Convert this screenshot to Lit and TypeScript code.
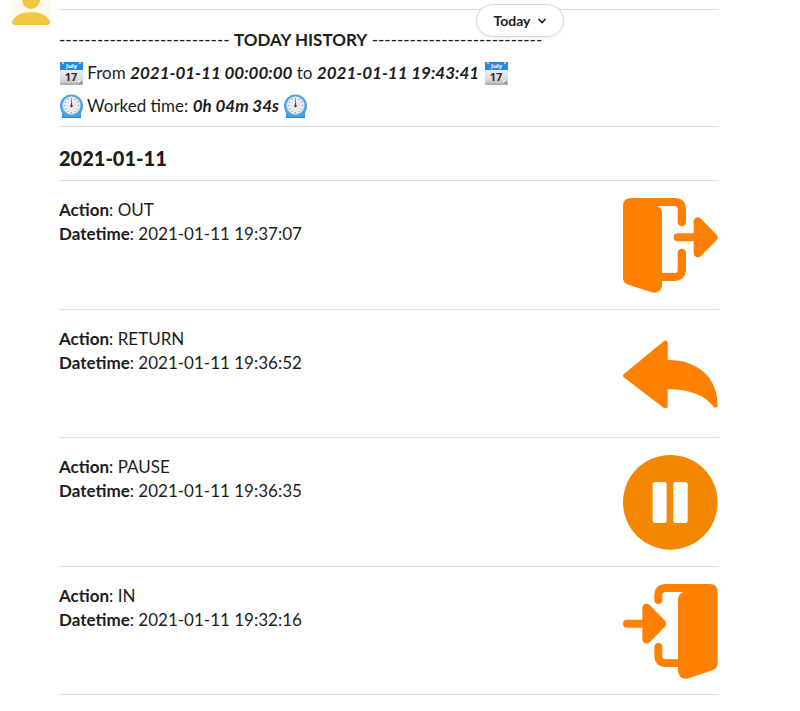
import { LitElement, html, css, svg } from "lit";
import { customElement, property } from "lit/decorators.js";

type ActionKind = "OUT" | "RETURN" | "PAUSE" | "IN";

interface Entry {
  action: ActionKind;
  datetime: string;
}

const ENTRIES: Entry[] = [
  { action: "OUT", datetime: "2021-01-11 19:37:07" },
  { action: "RETURN", datetime: "2021-01-11 19:36:52" },
  { action: "PAUSE", datetime: "2021-01-11 19:36:35" },
  { action: "IN", datetime: "2021-01-11 19:32:16" },
];

const DASHES = "-".repeat(27);

// Every action drawing lives in a 285 x 285 box.
const SHAPES = {
  OUT: svg`
    <path d="M24 0H158Q189 2 189 32V72A12 12 0 0 1 164 72V34Q164 24 154 24H103Q117 30 117 46V264Q112 286 90 284L16 260Q0 255 0 240V22Q2 0 24 0Z"/>
    <path d="M117 225H154Q164 225 164 215V165A12 12 0 0 1 189 165V217Q187 248 156 249H117Z"/>
    <path d="M164 106H212V70C212 59 226 54 234 62L281 110Q288 118 281 126L234 174C226 182 212 177 212 166V130H164A12 12 0 0 1 164 106Z"/>`,
  RETURN: svg`
    <path d="M2 142L122 43C127 40 134 42 134 48V99C215 98 284 144 284 235C284 243 275 245 270 238C247 205 199 187 134 186V237C134 244 127 245 122 242L2 151Q-2 146 2 142Z"/>`,
  PAUSE: svg`
    <circle cx="142" cy="142" r="142"/>
    <rect class="bar" x="89" y="81" width="42" height="123" rx="7"/>
    <rect class="bar" x="151" y="81" width="43" height="123" rx="7"/>`,
  IN: svg`
    <path d="M260 0H126Q95 2 94 32V48A12 12 0 0 0 118 48V34Q118 24 128 24H182Q165 30 165 48V262Q168 286 192 284L268 259Q284 253 284 238V22Q282 0 260 0Z"/>
    <path d="M166 226H128Q118 226 118 216V189A12 12 0 0 0 94 189V218Q96 248 126 249H166Z"/>
    <path d="M12 107H58V71C58 60 72 55 80 63L127 111Q132 119 127 127L80 175C72 182 58 178 58 167V131H12A12 12 0 0 1 12 107Z"/>`,
};

@customElement("emoji-calendar")
export class EmojiCalendar extends LitElement {
  static styles = css`
    :host { display: inline-block; vertical-align: -6px; width: 24px; height: 24px; }
    .art { display: block; width: 24px; height: 24px; }
    .month { font: 700 6px "Open Sans", sans-serif; fill: #fff; }
    .day { font: 700 11px "Open Sans", sans-serif; fill: #2b2b2b; }
  `;

  render() {
    return html`<svg class="art" viewBox="0 0 24 24" role="img" aria-label="calendar">
      <defs>
        <linearGradient id="paper" x1="0" y1="0" x2="0" y2="1">
          <stop offset="0" stop-color="#fcfcfc" />
          <stop offset="0.7" stop-color="#dedede" />
          <stop offset="1" stop-color="#b9b9b9" />
        </linearGradient>
      </defs>
      <rect x="1" y="1" width="23" height="23" rx="1" fill="url(#paper)" />
      <path d="M1 23h23" stroke="#a5a5a5" />
      <rect x="1" y="1" width="23" height="8" fill="#2089e4" />
      <circle cx="4" cy="2" r="1.3" fill="#b9c4cc" />
      <circle cx="21" cy="2" r="1.3" fill="#b9c4cc" />
      <path d="M19 23l4-4v4z" fill="#999" />
      <path d="M19 22v-3h4z" fill="#eee" />
      <text class="month" x="12.5" y="7" text-anchor="middle">July</text>
      <text class="day" x="12" y="20" text-anchor="middle">17</text>
    </svg>`;
  }
}

@customElement("emoji-clock")
export class EmojiClock extends LitElement {
  static styles = css`
    :host { display: inline-block; vertical-align: -6px; width: 24px; height: 24px; }
    .art { display: block; width: 24px; height: 24px; }
  `;

  render() {
    const ticks = Array.from({ length: 12 }, (_, i) => i * 30);
    return html`<svg class="art" viewBox="0 0 24 24" role="img" aria-label="clock">
      <path d="M3 16h19v8h-19z" fill="#3d9be9" />
      <circle cx="12.500" cy="12" r="11.500" fill="#45a1ec" />
      <path d="M3 23.500h19" stroke="#2f86d2" />
      <circle cx="12.500" cy="11.500" r="9" fill="#e9eced" stroke="#b4c3ce" stroke-width="0.6" />
      ${ticks.map((a) => svg`<path d="M12.500 4v1" stroke="#666" stroke-width="0.8" transform="rotate(${a} 12.500 11.500)" />`)}
      <path d="M12.500 12V5.500" stroke="#d0564d" stroke-width="1" />
      <path d="M12.500 12V9" stroke="#444" stroke-width="1.200" />
      <circle cx="12.500" cy="12" r="1.200" fill="#333" />
    </svg>`;
  }
}

@customElement("history-entry")
export class HistoryEntry extends LitElement {
  static styles = css`
    :host {
      display: flex;
      justify-content: space-between;
      gap: 16px;
      box-sizing: border-box;
      padding: 17px 1px 15px 0;
      border-bottom: 1px solid #dddddd;
    }
    .text { margin: 0; line-height: 24px; }
    .icon { flex: none; width: 95px; height: 95px; fill: #ff8000; }
    .icon.PAUSE { fill: #f48700; }
    .icon .bar { fill: #fff; }
  `;

  @property({ attribute: false }) entry!: Entry;

  render() {
    const { action, datetime } = this.entry;
    return html`
      <p class="text"><b>Action</b>: ${action}<br /><b>Datetime</b>: ${datetime}</p>
      <svg class="icon ${action}" viewBox="0 0 285 285" aria-hidden="true">${SHAPES[action]}</svg>
    `;
  }
}

@customElement("app-root")
export class AppRoot extends LitElement {
  static styles = css`
    :host {
      display: block;
      position: relative;
      overflow: hidden;
      min-height: 100vh;
      background: #fff;
      color: #1d1c1d;
      font: 400 17px/24px Lato, sans-serif;
    }
    .message { display: flex; gap: 8px; padding: 0 81px 16px 11px; }
    .avatar { flex: none; width: 40px; height: 40px; margin-top: -15px; }
    .body { flex: 1; min-width: 0; padding-top: 9px; }
    .summary {
      padding: 13px 0 4px;
      border: solid #dddddd;
      border-width: 1px 0;
    }
    .line { margin: 0; line-height: 33px; height: 33px; white-space: nowrap; }
    .date {
      margin: 0;
      padding: 19px 0 10px;
      border-bottom: 1px solid #dddddd;
      font-size: 20px;
      line-height: 24px;
      font-weight: 900;
    }
    .entries {
      display: grid;
      grid-auto-rows: 1fr;
      min-height: 514px;
    }
    .today {
      position: absolute;
      top: 4px;
      left: 65%;
      transform: translateX(-50%);
      display: flex;
      align-items: center;
      justify-content: center;
      gap: 6px;
      box-sizing: border-box;
      width: 88px;
      height: 33px;
      padding: 0;
      border: 1px solid #d8d8d8;
      border-radius: 17px;
      background: #fff;
      box-shadow: 0 1px 3px rgba(0, 0, 0, 0.08);
      color: #1d1c1d;
      font: 700 14px/20px Lato, sans-serif;
    }
    .chevron { width: 10px; height: 8px; fill: none; stroke: #1d1c1d; stroke-width: 1.6; }
  `;

  render() {
    return html`
      <main class="message">
        <svg class="avatar" viewBox="0 0 40 40" role="img" aria-label="User avatar">
          <rect width="40" height="40" rx="4" fill="#fef9ec" />
          <circle cx="20" cy="15" r="9" fill="#f2c744" />
          <path d="M1 37C3 31 10 27 20 27S37 31 39 37Q39 40 36 40H4Q1 40 1 37Z" fill="#f2c744" />
        </svg>
        <div class="body">
          <section class="summary">
            <p class="line">${DASHES} <b>TODAY HISTORY</b> ${DASHES}</p>
            <p class="line"><emoji-calendar></emoji-calendar> From <b><i>2021-01-11 00:00:00</i></b> to <b><i>2021-01-11 19:43:41</i></b> <emoji-calendar></emoji-calendar></p>
            <p class="line"><emoji-clock></emoji-clock> Worked time: <b><i>0h 04m 34s</i></b> <emoji-clock></emoji-clock></p>
          </section>
          <h2 class="date">2021-01-11</h2>
          <div class="entries">
            ${ENTRIES.map((e) => html`<history-entry .entry=${e}></history-entry>`)}
          </div>
        </div>
      </main>
      <button class="today" type="button">
        Today
        <svg class="chevron" viewBox="0 0 10 8" aria-hidden="true"><path d="M1.500 2L5 5.500L8.500 2" /></svg>
      </button>
    `;
  }
}
